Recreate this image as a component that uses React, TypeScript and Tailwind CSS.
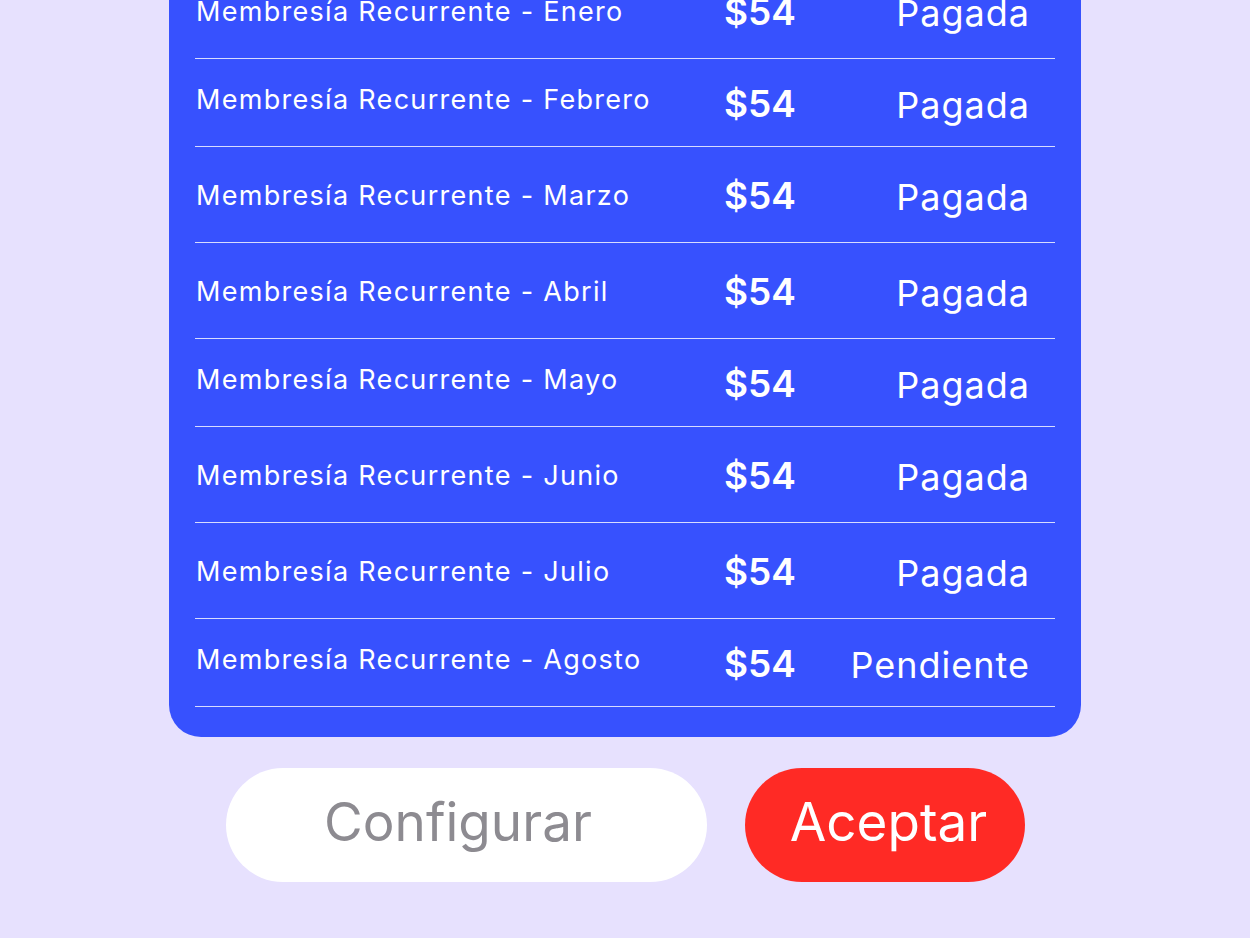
import React from 'react';

interface Cuota {
  mes: string;
  monto: string;
  estado: string;
  alto: string;
}

const cuotas: Cuota[] = [
  { mes: 'Enero', monto: '$54', estado: 'Pagada', alto: 'h-[96px]' },
  { mes: 'Febrero', monto: '$54', estado: 'Pagada', alto: 'h-[88px]' },
  { mes: 'Marzo', monto: '$54', estado: 'Pagada', alto: 'h-[96px]' },
  { mes: 'Abril', monto: '$54', estado: 'Pagada', alto: 'h-[96px]' },
  { mes: 'Mayo', monto: '$54', estado: 'Pagada', alto: 'h-[88px]' },
  { mes: 'Junio', monto: '$54', estado: 'Pagada', alto: 'h-[96px]' },
  { mes: 'Julio', monto: '$54', estado: 'Pagada', alto: 'h-[96px]' },
  { mes: 'Agosto', monto: '$54', estado: 'Pendiente', alto: 'h-[88px]' },
];

export default function App() {
  return (
    <div
      className="w-full h-[938px] overflow-hidden bg-[#e7e1fe] flex flex-col items-center"
      style={{ fontFamily: 'Inter, "Open Sans", sans-serif' }}
    >
      <div className="-mt-[37px] w-[912px] bg-[#3751fe] rounded-b-[32px] px-[26px] pb-[30px] text-white">
        {cuotas.map((c) => (
          <div key={c.mes} className={`${c.alto} flex items-center border-b border-white/80`}>
            <div className="self-end mb-[33px] w-[529px] text-[27px] tracking-[1.3px] leading-none pl-[1px] whitespace-nowrap">
              Membresía Recurrente - {c.mes}
            </div>
            <div className="w-[110px] text-[37px] font-semibold leading-none mt-[2px]">{c.monto}</div>
            <div className="flex-1 text-right pr-[25px] text-[36px] tracking-[1px] leading-none mt-[4px]">
              {c.estado}
            </div>
          </div>
        ))}
      </div>
      <div className="mt-[31px] flex gap-[38px]">
        <button className="w-[481px] h-[114px] rounded-full bg-white text-[#8d8b91] text-[53px] pr-[16px] pb-[4px]">
          Configurar
        </button>
        <button className="w-[280px] h-[114px] rounded-full bg-[#ff2a25] text-white text-[53px] pl-[8px] pb-[4px]">
          Aceptar
        </button>
      </div>
    </div>
  );
}
